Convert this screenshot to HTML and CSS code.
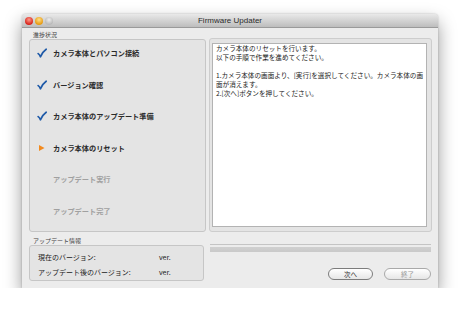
FILE: index.html
```html
<!DOCTYPE html>
<html lang="ja">
<head>
    <meta charset="UTF-8">
    <title>Firmware Updater</title>
    <link rel="stylesheet" href="styles.css">
</head>
<body>
    <div class="window">
        <div class="titlebar">
            <div class="lights">
                <span class="light close"></span>
                <span class="light minimize"></span>
                <span class="light zoom"></span>
            </div>
            <div class="title">Firmware Updater</div>
            <div></div>
        </div>

        <div class="main">
            <div class="group-label">進捗状況</div>
            <div class="steps-box">
                <div class="step done">
                    <svg class="icon" viewBox="0 0 10 10"><path d="M1.2 5.6 Q2.6 6.6 3.4 8.8 Q5.5 3.8 9.2 1.2" /></svg>
                    <span>カメラ本体とパソコン接続</span>
                </div>
                <div class="step done">
                    <svg class="icon" viewBox="0 0 10 10"><path d="M1.2 5.6 Q2.6 6.6 3.4 8.8 Q5.5 3.8 9.2 1.2" /></svg>
                    <span>バージョン確認</span>
                </div>
                <div class="step done">
                    <svg class="icon" viewBox="0 0 10 10"><path d="M1.2 5.6 Q2.6 6.6 3.4 8.8 Q5.5 3.8 9.2 1.2" /></svg>
                    <span>カメラ本体のアップデート準備</span>
                </div>
                <div class="step current">
                    <svg class="icon" viewBox="0 0 10 10"><polygon points="2,2 7.5,5 2,8" /></svg>
                    <span>カメラ本体のリセット</span>
                </div>
                <div class="step pending">
                    <span class="icon"></span>
                    <span>アップデート実行</span>
                </div>
                <div class="step pending">
                    <span class="icon"></span>
                    <span>アップデート完了</span>
                </div>
            </div>

            <div class="message-box">
                <div class="message">
                    カメラ本体のリセットを行います。<br>
                    以下の手順で作業を進めてください。<br>
                    <br>
                    1.カメラ本体の画面より、[実行]を選択してください。カメラ本体の画面が消えます。<br>
                    2.[次へ]ボタンを押してください。
                </div>
            </div>
        </div>

        <div class="bottom">
            <div class="info">
                <div class="group-label">アップデート情報</div>
                <div class="info-box">
                    <span>現在のバージョン:</span><span>ver.</span>
                    <span>アップデート後のバージョン:</span><span>ver.</span>
                </div>
            </div>
            <div class="actions">
                <div class="progress"></div>
                <div class="buttons">
                    <button class="btn">次へ</button>
                    <button class="btn disabled">終了</button>
                </div>
            </div>
        </div>
    </div>
</body>
</html>
```

FILE: styles.css
```css
body {
    margin: 0;
    background-color: #fff;
    font-family: "Noto Sans CJK JP", "Liberation Sans", sans-serif;
    color: #222;
}
.window {
    margin: 14px 0 0 22px;
    width: 416px;
    height: 274px;
    background-color: #ececec;
    border-radius: 4px 4px 0 0;
    box-shadow: 0 8px 18px rgba(0, 0, 0, 0.4), 0 0 2px rgba(0, 0, 0, 0.25);
    overflow: hidden;
}
.titlebar {
    height: 14px;
    display: grid;
    grid-template-columns: 1fr auto 1fr;
    align-items: center;
    background: linear-gradient(#e9e9e9, #bdbdbd);
    border-bottom: 1px solid #9a9a9a;
    box-sizing: border-box;
}
.lights {
    display: flex;
    gap: 2px;
    padding-left: 3px;
}
.light {
    width: 8px;
    height: 8px;
    border-radius: 50%;
}
.light.close {
    background: radial-gradient(circle at 50% 35%, #ff9a8a, #d8231b 70%);
}
.light.minimize {
    background: radial-gradient(circle at 50% 35%, #ffe08a, #e79a10 70%);
}
.light.zoom {
    background: radial-gradient(circle at 50% 35%, #eeeeee, #b9b9b9 70%);
}
.title {
    font-family: "Liberation Sans", sans-serif;
    font-size: 8px;
    color: #2a2a2a;
}

/* 上段 */
.main {
    display: grid;
    grid-template-columns: 177px 223px;
    column-gap: 3px;
    padding: 3px 6px 0 7px;
}
.group-label {
    font-size: 6px;
    line-height: 8px;
    height: 8px;
    color: #444;
    padding-left: 4px;
}
.steps-box {
    grid-column: 1;
    grid-row: 2;
    height: 193px;
    box-sizing: border-box;
    background-color: #e4e4e4;
    border: 1px solid #c6c6c6;
    border-radius: 3px;
    padding-top: 5px;
    display: flex;
    flex-direction: column;
    gap: 15.5px;
}
.step {
    height: 16px;
    display: flex;
    align-items: center;
    gap: 6px;
    padding-left: 7px;
    font-size: 7.2px;
    font-weight: bold;
}
.step .icon {
    width: 10px;
    height: 10px;
    flex-shrink: 0;
}
.step.done path {
    fill: none;
    stroke: #1f5aa8;
    stroke-width: 1.7;
    stroke-linecap: round;
    stroke-linejoin: round;
}
.step.current polygon {
    fill: #f28a1e;
}
.step.done,
.step.current {
    color: #2a2a2a;
}
.step.pending {
    color: #a0a0a0;
}
.message-box {
    grid-column: 2;
    grid-row: 1 / span 2;
    margin-top: 7px;
    height: 194px;
    box-sizing: border-box;
    background-color: #e4e4e4;
    border: 1px solid #cdcdcd;
    border-radius: 3px;
    padding: 4px 4px 4px 2px;
}
.message {
    height: 100%;
    box-sizing: border-box;
    background-color: #fff;
    border: 1px solid #b3b3b3;
    padding: 0 0 0 3px;
    font-size: 6.6px;
    line-height: 9px;
    color: #1a1a1a;
}

/* 下段 */
.bottom {
    display: grid;
    grid-template-columns: 175px 221px;
    column-gap: 6px;
    padding: 5px 7px 0 7px;
}
.info-box {
    height: 36px;
    box-sizing: border-box;
    background-color: #e4e4e4;
    border: 1px solid #c6c6c6;
    border-radius: 3px;
    padding: 3px 0 0 8px;
    display: grid;
    grid-template-columns: 121px auto;
    grid-auto-rows: 15px;
    align-items: center;
    font-size: 7px;
    color: #222;
}
.actions {
    padding-top: 7px;
}
.progress {
    height: 8px;
    box-sizing: border-box;
    border-top: 1px solid #c4c4c4;
    background: linear-gradient(#ececec 0, #ececec 2px, #d0d0d0 2px, #c9c9c9 100%);
}
.buttons {
    display: flex;
    justify-content: flex-end;
    gap: 11px;
    margin-top: 16px;
}
.btn {
    height: 12px;
    width: 45px;
    padding: 0;
    font-family: "Noto Sans CJK JP", sans-serif;
    font-size: 6.5px;
    line-height: 10px;
    color: #222;
    background: linear-gradient(#ffffff, #e6e6e6);
    border: 1px solid #7c7c7c;
    border-radius: 6px;
}
.btn.disabled {
    width: 47px;
    color: #9a9a9a;
    border-color: #a9a9a9;
}
```
